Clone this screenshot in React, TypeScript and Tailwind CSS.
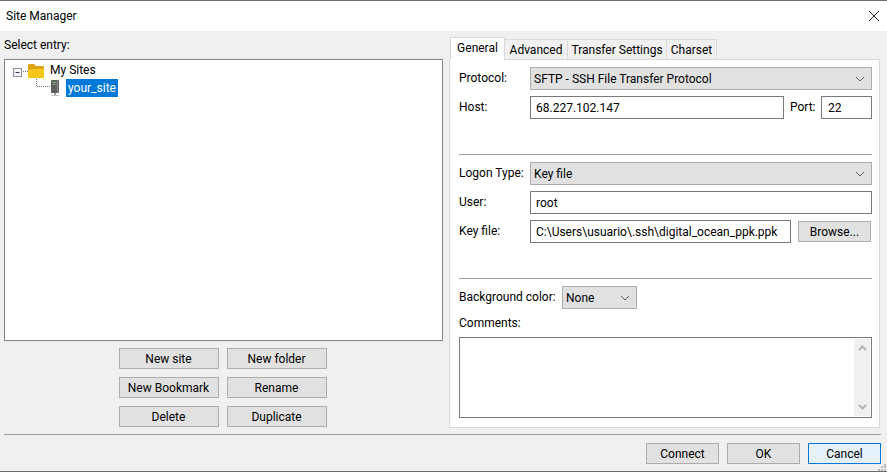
const font = "font-['Roboto','Open_Sans',sans-serif]";

function Btn({ label, w = "w-[100px]", primary = false }: { label: string; w?: string; primary?: boolean }) {
  return (
    <div
      className={`${w} h-[21px] flex items-center justify-center border ${
        primary ? "border-[#0078d7] bg-[#e5f1fb]" : "border-[#adadad] bg-[#e1e1e1]"
      }`}
    >
      {label}
    </div>
  );
}

function Chevron() {
  return (
    <svg width="10" height="6" viewBox="0 0 10 6" className="shrink-0 mr-[2px]">
      <path d="M1 1 L5 5 L9 1" fill="none" stroke="#606060" strokeWidth="1" />
    </svg>
  );
}

function Select({ value, className }: { value: string; className: string }) {
  return (
    <div className={`h-[23px] flex items-center justify-between pl-[3px] pr-[4px] border border-[#adadad] bg-[#e1e1e1] ${className}`}>
      <span>{value}</span>
      <Chevron />
    </div>
  );
}

function Input({ value, className }: { value: string; className: string }) {
  return (
    <div className={`h-[23px] flex items-center pl-[5px] border border-[#7a7a7a] bg-white ${className}`}>
      {value}
    </div>
  );
}

function Label({ text, w = "w-[71px]" }: { text: string; w?: string }) {
  return <div className={`${w} shrink-0 -mt-[2px]`}>{text}</div>;
}

function Tab({ label, active = false, w }: { label: string; active?: boolean; w: string }) {
  if (active) {
    return (
      <div className={`${w} h-[23px] -mb-px relative z-10 flex items-start justify-center pt-[2px] bg-white border border-b-0 border-[#d9d9d9]`}>
        {label}
      </div>
    );
  }
  return (
    <div className={`${w} h-[20px] flex items-center justify-center pt-[1px] bg-[#f0f0f0] border border-b-0 border-l-0 border-[#d9d9d9]`}>
      {label}
    </div>
  );
}

function FolderRowIcon() {
  return (
    <svg width="37" height="18" viewBox="0 0 37 18" className="shrink-0">
      <rect x="0.5" y="7.5" width="8" height="8" fill="#f4f4f4" stroke="#8f8fa0" />
      <path d="M2.5 11.5 H6.5" stroke="#2f3a66" />
      <path d="M10 10.5 H15" stroke="#777" strokeDasharray="1 1" />
      <path d="M15 4 a1 1 0 0 1 1 -1 H21 L23 5 H30 a1 1 0 0 1 1 1 V9 H15 Z" fill="#dda415" />
      <path d="M15 9 L20 8 H31 V16 a1 1 0 0 1 -1 1 H15 Z" fill="#fbc61a" />
    </svg>
  );
}

function ServerRowIcon() {
  return (
    <svg width="46" height="18" viewBox="0 0 46 18" className="shrink-0">
      <path d="M23.5 0 V7.5 H37" fill="none" stroke="#777" strokeDasharray="1 1" />
      <rect x="38" y="1" width="8" height="13" rx="1" fill="#5e5e5e" />
      <rect x="44" y="2" width="1" height="11" fill="#8a8a8a" />
      <rect x="39.5" y="3" width="4" height="1" fill="#6fbf73" />
      <rect x="39.5" y="5" width="4" height="1" fill="#8a8a8a" />
      <rect x="41" y="14" width="2" height="2" fill="#a0a0a0" />
      <rect x="38" y="16" width="8" height="1" fill="#c4c4c4" />
    </svg>
  );
}

function ResizeGrip() {
  return (
    <svg width="9" height="7" viewBox="0 0 9 7" className="absolute right-[1px] bottom-[-7px]">
      <rect x="7" y="0" width="2" height="2" fill="#bdbdbd" />
      <rect x="4" y="2" width="2" height="2" fill="#bdbdbd" />
      <rect x="7" y="2" width="2" height="2" fill="#bdbdbd" />
      <rect x="1" y="5" width="2" height="2" fill="#bdbdbd" />
      <rect x="4" y="5" width="2" height="2" fill="#bdbdbd" />
      <rect x="7" y="5" width="2" height="2" fill="#bdbdbd" />
    </svg>
  );
}

export default function App() {
  return (
    <div className={`w-[887px] h-[472px] flex flex-col overflow-hidden bg-[#f0f0f0] border-t border-b border-[#6d6d6d] text-[12px] leading-[16px] text-black ${font}`}>
      {/* title bar */}
      <div className="h-[30px] shrink-0 bg-white flex items-center justify-between pl-[6px] pr-[6px]">
        <span>Site Manager</span>
        <svg width="12" height="12" viewBox="0 0 12 12" className="mr-[1px]">
          <path d="M1 1 L11 11 M11 1 L1 11" stroke="#222" strokeWidth="1" />
        </svg>
      </div>

      {/* main */}
      <div className="flex gap-[6px] pl-[4px] h-[397px]">
        <div className="w-[439px] flex flex-col">
          <div className="h-[28px] pt-[6px]">Select entry:</div>
          <div className="h-[282px] bg-white border border-[#82828c] pt-[1px]">
            <div className="h-[18px] flex items-center pl-[8px]">
              <FolderRowIcon />
              <span>My Sites</span>
            </div>
            <div className="h-[18px] flex items-center pl-[8px]">
              <ServerRowIcon />
              <span className="ml-[7px] h-[18px] px-[2px] flex items-center bg-[#0078d7] text-white">your_site</span>
            </div>
          </div>
          <div className="grid grid-cols-[100px_100px] gap-x-[8px] gap-y-[8px] justify-center mt-[7px] ml-[-2px]">
            {["New site", "New folder", "New Bookmark", "Rename", "Delete", "Duplicate"].map((b) => (
              <Btn key={b} label={b} />
            ))}
          </div>
        </div>

        <div className="w-[431px] pt-[6px] flex flex-col">
          <div className="flex items-end h-[22px] pl-[1px]">
            <Tab label="General" active w="w-[55px]" />
            <Tab label="Advanced" w="w-[63px]" />
            <Tab label="Transfer Settings" w="w-[99px]" />
            <Tab label="Charset" w="w-[50px]" />
          </div>
          <div className="h-[369px] bg-white border border-[#d9d9d9] pt-[7px] pl-[9px] pr-[7px] flex flex-col">
            <div className="flex items-center">
              <Label text="Protocol:" />
              <Select value="SFTP - SSH File Transfer Protocol" className="flex-1" />
            </div>
            <div className="flex items-center mt-[6px]">
              <Label text="Host:" />
              <Input value="68.227.102.147" className="w-[254px]" />
              <span className="ml-[6px] mr-[6px] -mt-[2px] w-[25px] whitespace-nowrap">Port:</span>
              <Input value="22" className="w-[51px] pl-[6px]" />
            </div>
            <div className="h-px bg-[#a0a0a0] mt-[35px]" />
            <div className="flex items-center mt-[7px]">
              <Label text="Logon Type:" />
              <Select value="Key file" className="flex-1" />
            </div>
            <div className="flex items-center mt-[6px]">
              <Label text="User:" />
              <Input value="root" className="flex-1" />
            </div>
            <div className="flex items-center mt-[6px]">
              <Label text="Key file:" />
              <Input value="C:\Users\usuario\.ssh\digital_ocean_ppk.ppk" className="w-[261px]" />
              <div className="ml-[7px]">
                <Btn label="Browse..." w="w-[73px]" />
              </div>
            </div>
            <div className="h-px bg-[#a0a0a0] mt-[35px]" />
            <div className="flex items-center mt-[7px]">
              <Label text="Background color:" w="w-[103px]" />
              <Select value="None" className="w-[75px]" />
            </div>
            <div className="mt-[6px]">Comments:</div>
            <div className="h-[81px] mt-[6px] bg-white border border-[#7a7a7a] flex justify-end pr-px">
              <div className="w-[16px] my-px bg-[#f0f0f0] flex flex-col items-center justify-between py-[6px]">
                <svg width="9" height="6" viewBox="0 0 9 6">
                  <path d="M1 5 L4.5 1.5 L8 5" fill="none" stroke="#b4b4b4" strokeWidth="2" />
                </svg>
                <svg width="9" height="6" viewBox="0 0 9 6">
                  <path d="M1 1 L4.5 4.5 L8 1" fill="none" stroke="#b4b4b4" strokeWidth="2" />
                </svg>
              </div>
            </div>
          </div>
        </div>
      </div>

      {/* footer */}
      <div className="h-px bg-[#a0a0a0] ml-[4px] w-[877px] mt-[6px] shrink-0" />
      <div className="flex justify-end gap-[8px] pr-[6px] mt-[8px] relative">
        <Btn label="Connect" w="w-[73px]" />
        <Btn label="OK" w="w-[73px]" />
        <Btn label="Cancel" w="w-[73px]" primary />
        <ResizeGrip />
      </div>
    </div>
  );
}
